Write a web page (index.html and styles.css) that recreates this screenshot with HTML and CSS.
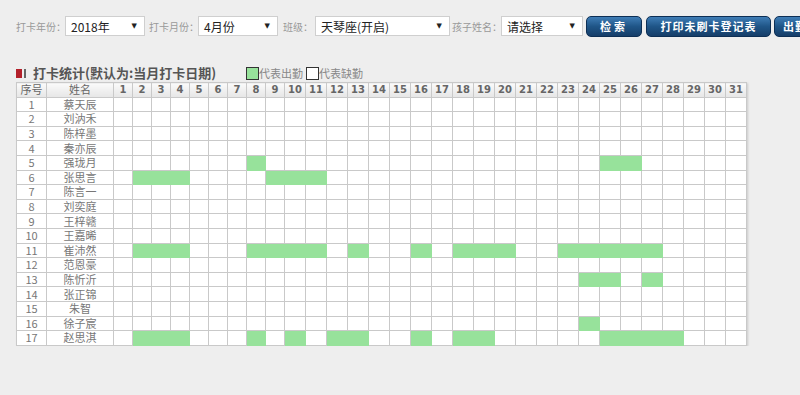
FILE: index.html
```html
<!DOCTYPE html>
<html lang="zh-CN">
<head>
    <meta charset="UTF-8">
    <title>打卡统计</title>
    <link rel="stylesheet" href="styles.css">
</head>
<body>
    <div class="page">
        <div class="toolbar">
            <label class="lbl w49">打卡年份：</label>
            <span class="sel w80">2018年</span>
            <label class="lbl w49 ml4">打卡月份：</label>
            <span class="sel w80">4月份</span>
            <label class="lbl w32 ml5">班级：</label>
            <span class="sel w135">天琴座(开启)</span>
            <label class="lbl w49 ml2">孩子姓名：</label>
            <span class="sel w82">请选择</span>
            <button class="btn w56 ml3 wide">检索</button>
            <button class="btn w125 ml4">打印未刷卡登记表</button>
            <button class="btn w90 ml3">出勤统计导出</button>
        </div>

        <div class="title-row">
            <span class="mark"></span><span class="mark-bar"></span>
            <h2 class="title">打卡统计(默认为:当月打卡日期)</h2>
            <span class="legend"><i class="box on-box"></i>代表出勤<i class="box off-box"></i>代表缺勤</span>
        </div>

        <table class="stats" id="stats">
            <thead>
                <tr id="headRow">
                    <th class="c-no">序号</th>
                    <th class="c-name">姓名</th>
                </tr>
            </thead>
            <tbody id="statsBody"></tbody>
        </table>
    </div>

    <script>
        const kids = [
            ['蔡天辰', []],
            ['刘汭禾', []],
            ['陈梓墨', []],
            ['秦亦辰', []],
            ['强珑月', [8, 25, 26]],
            ['张思言', [2, 3, 4, 9, 10, 11]],
            ['陈言一', []],
            ['刘奕庭', []],
            ['王梓赣', []],
            ['王嘉晞', []],
            ['崔沛然', [2, 3, 4, 8, 9, 10, 11, 13, 16, 18, 19, 20, 23, 24, 25, 26, 27]],
            ['范恩豪', []],
            ['陈忻沂', [24, 25, 27]],
            ['张正锦', []],
            ['朱智', []],
            ['徐子宸', [24]],
            ['赵思淇', [2, 3, 4, 8, 10, 12, 13, 16, 18, 19, 25, 26, 27, 28]]
        ];

        const headRow = document.getElementById('headRow');
        for (let d = 1; d <= 31; d++) {
            const th = document.createElement('th');
            th.className = d < 10 ? 'day d1' : 'day d2';
            th.textContent = d;
            headRow.appendChild(th);
        }

        const body = document.getElementById('statsBody');
        kids.forEach(function(kid, i) {
            const tr = document.createElement('tr');
            let html = '<td>' + (i + 1) + '</td><td>' + kid[0] + '</td>';
            for (let d = 1; d <= 31; d++) {
                html += kid[1].indexOf(d) > -1 ? '<td class="on"></td>' : '<td></td>';
            }
            tr.innerHTML = html;
            body.appendChild(tr);
        });
    </script>
</body>
</html>
```

FILE: styles.css
```css
body {
    margin: 0;
    background-color: #eeeeee;
    font-family: "Noto Sans CJK SC", sans-serif;
    color: #333;
    overflow: hidden;
}

.page {
    padding: 16px 0 0 16px;
}

/* toolbar */
.toolbar {
    display: flex;
    align-items: center;
    height: 20px;
    white-space: nowrap;
}

.toolbar > * {
    flex-shrink: 0;
}

.lbl {
    font-size: 10px;
    color: #999;
}

.sel {
    display: flex;
    align-items: center;
    justify-content: space-between;
    box-sizing: border-box;
    height: 20px;
    padding: 0 7px 0 5px;
    background-color: #fff;
    border: 1px solid #cfcfcf;
    font-size: 12px;
    color: #222;
}

.sel::after {
    content: "▼";
    font-family: "DejaVu Sans", sans-serif;
    font-size: 7px;
    color: #222;
}

.btn {
    box-sizing: border-box;
    height: 21px;
    padding: 0;
    border: 1px solid #0d2f55;
    border-radius: 5px;
    background: linear-gradient(#3f7db6, #1f5587 50%, #163e69);
    color: #fff;
    font-family: "Noto Sans CJK SC", sans-serif;
    font-size: 11px;
    font-weight: bold;
    letter-spacing: 1px;
    overflow: hidden;
    white-space: nowrap;
}

.btn.wide {
    letter-spacing: 3px;
}

.w32 { width: 32px; }
.w49 { width: 49px; }
.w56 { width: 56px; }
.w80 { width: 80px; }
.w82 { width: 82px; }
.w90 { width: 90px; }
.w125 { width: 125px; }
.w135 { width: 135px; }
.ml2 { margin-left: 2px; }
.ml3 { margin-left: 3px; }
.ml4 { margin-left: 4px; }
.ml5 { margin-left: 5px; }

/* title */
.title-row {
    display: flex;
    align-items: center;
    height: 18px;
    margin-top: 28px;
}

.mark {
    width: 6px;
    height: 9px;
    background-color: #b3202a;
}

.mark-bar {
    width: 2px;
    height: 9px;
    margin-left: 2px;
    background-color: #666;
}

.title {
    margin: 0 0 0 7px;
    font-size: 13px;
    line-height: 18px;
    font-weight: bold;
    color: #555;
    white-space: nowrap;
}

.legend {
    display: flex;
    align-items: center;
    margin-left: 30px;
    font-size: 11px;
    color: #888;
    white-space: nowrap;
}

.box {
    display: inline-block;
    box-sizing: border-box;
    width: 13px;
    height: 13px;
    border: 1px solid #333;
}

.on-box {
    background-color: #97e29b;
}

.off-box {
    margin-left: 3px;
    background-color: #fff;
}

/* table */
.stats {
    border-collapse: collapse;
    table-layout: fixed;
    width: 730px;
    background-color: #fff;
    box-shadow: 1px 1px 2px rgba(0, 0, 0, 0.15);
}

.stats th,
.stats td {
    height: 13.6px;
    padding: 0;
    border: 1px solid #c9c9c9;
    text-align: center;
    font-size: 11px;
    line-height: 13px;
    color: #777;
    overflow: hidden;
    white-space: nowrap;
}

.stats th {
    background: linear-gradient(#fafafa, #e6e6e6);
    font-weight: normal;
    color: #666;
}

.stats th.day {
    font-family: "DejaVu Sans", sans-serif;
    font-size: 10px;
    font-weight: bold;
    color: #666;
}

.c-no { width: 29px; }
.c-name { width: 66px; }
.d1 { width: 18px; }
.d2 { width: 20px; }

.stats td.on {
    background-color: #97e29b;
    border-color: #97e29b;
}
```
